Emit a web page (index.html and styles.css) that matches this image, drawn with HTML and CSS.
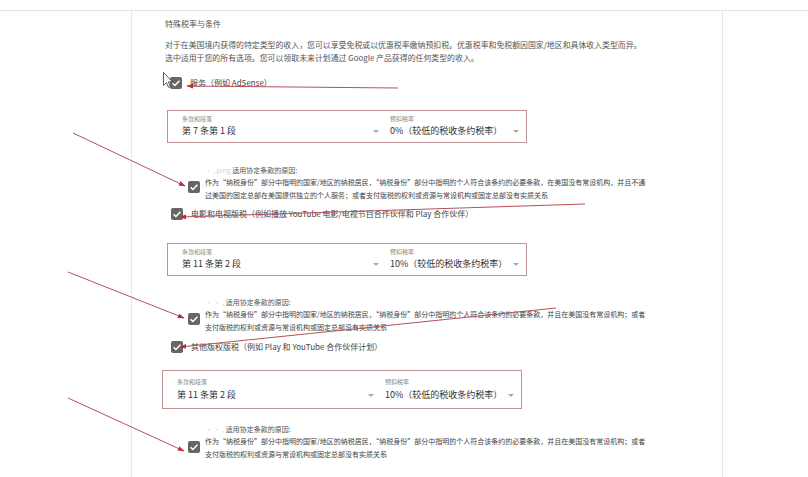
FILE: index.html
```html
<!DOCTYPE html>
<html lang="zh-CN">
<head>
    <meta charset="UTF-8">
    <meta name="viewport" content="width=device-width, initial-scale=1.0">
    <title>特殊税率与条件</title>
    <link rel="stylesheet" href="styles.css">
</head>
<body>
  <div class="page">
    <div class="gutter"></div>
    <div class="main">
      <h1 class="title">特殊税率与条件</h1>
      <p class="intro">对于在美国境内获得的特定类型的收入，您可以享受免税或以优惠税率缴纳预扣税。优惠税率和免税额因国家/地区和具体收入类型而异。<br>选中适用于您的所有选项。您可以领取未来计划通过 Google 产品获得的任何类型的收入。</p>

      <!-- 服务 -->
      <label class="option first">
        <span class="check"><svg viewBox="0 0 12 12"><path d="M2.6 6.2l2.3 2.3 4.6-4.8" /></svg></span>
        <span>服务（例如 AdSense）</span>
      </label>
      <div class="treaty">
        <div class="field article">
          <div class="field-label">条款和段落</div>
          <div class="field-value">第 7 条第 1 段<i class="caret"></i></div>
        </div>
        <div class="field rate">
          <div class="field-label">预扣税率</div>
          <div class="field-value">0%（较低的税收条约税率）<i class="caret"></i></div>
        </div>
      </div>
      <div class="reason r1">
        <span class="check"><svg viewBox="0 0 12 12"><path d="M2.6 6.2l2.3 2.3 4.6-4.8" /></svg></span>
        <div class="reason-text">
          <div class="reason-label"><span class="faded">· ˌ ping</span> 适用协定条款的原因:</div>
          <p>作为“纳税身份”部分中指明的国家/地区的纳税居民，“纳税身份”部分中指明的个人符合该条约的必要条款，在美国没有常设机构，并且不通<br>过美国的固定总部在美国提供独立的个人服务；或者支付版税的权利或资源与常设机构或固定总部没有实质关系</p>
        </div>
      </div>

      <!-- 电影和电视版税 -->
      <label class="option o2">
        <span class="check"><svg viewBox="0 0 12 12"><path d="M2.6 6.2l2.3 2.3 4.6-4.8" /></svg></span>
        <span>电影和电视版税（例如播放 YouTube 电影/电视节目合作伙伴和 Play 合作伙伴）</span>
      </label>
      <div class="treaty t2">
        <div class="field article">
          <div class="field-label">条款和段落</div>
          <div class="field-value">第 11 条第 2 段<i class="caret"></i></div>
        </div>
        <div class="field rate">
          <div class="field-label">预扣税率</div>
          <div class="field-value">10%（较低的税收条约税率）<i class="caret"></i></div>
        </div>
      </div>
      <div class="reason r2">
        <span class="check"><svg viewBox="0 0 12 12"><path d="M2.6 6.2l2.3 2.3 4.6-4.8" /></svg></span>
        <div class="reason-text">
          <div class="reason-label"><span class="faded">· · ,</span> 适用协定条款的原因:</div>
          <p>作为“纳税身份”部分中指明的国家/地区的纳税居民，“纳税身份”部分中指明的个人符合该条约的必要条款，并且在美国没有常设机构；或者<br>支付版税的权利或资源与常设机构或固定总部没有实质关系</p>
        </div>
      </div>

      <!-- 其他版权版税 -->
      <label class="option o3">
        <span class="check"><svg viewBox="0 0 12 12"><path d="M2.6 6.2l2.3 2.3 4.6-4.8" /></svg></span>
        <span>其他版权版税（例如 Play 和 YouTube 合作伙伴计划）</span>
      </label>
      <div class="treaty t3">
        <div class="field article">
          <div class="field-label">条款和段落</div>
          <div class="field-value">第 11 条第 2 段<i class="caret"></i></div>
        </div>
        <div class="field rate">
          <div class="field-label">预扣税率</div>
          <div class="field-value">10%（较低的税收条约税率）<i class="caret"></i></div>
        </div>
      </div>
      <div class="reason r3">
        <span class="check"><svg viewBox="0 0 12 12"><path d="M2.6 6.2l2.3 2.3 4.6-4.8" /></svg></span>
        <div class="reason-text">
          <div class="reason-label"><span class="faded">· · ,</span> 适用协定条款的原因:</div>
          <p>作为“纳税身份”部分中指明的国家/地区的纳税居民，“纳税身份”部分中指明的个人符合该条约的必要条款，并且在美国没有常设机构；或者<br>支付版税的权利或资源与常设机构或固定总部没有实质关系</p>
        </div>
      </div>
    </div>
    <div class="aside"></div>
  </div>

  <!-- annotation arrows drawn over the screenshot -->
  <svg class="marks" viewBox="0 0 808 477" width="808" height="477">
    <defs>
      <marker id="head" viewBox="0 0 10 10" refX="9" refY="5" markerWidth="7" markerHeight="7" orient="auto">
        <path d="M0 1.5L10 5 0 8.5z" fill="#c4283a" />
      </marker>
    </defs>
    <g stroke="#b8505a" stroke-width="1" fill="none" marker-end="url(#head)">
      <line x1="398" y1="88" x2="187" y2="86" />
      <line x1="73" y1="133" x2="185" y2="186" />
      <line x1="585" y1="204" x2="180" y2="217" />
      <line x1="68" y1="272" x2="184" y2="318" />
      <line x1="556" y1="308" x2="180" y2="347" />
      <line x1="68" y1="398" x2="184" y2="451" />
    </g>
    <path class="cursor" d="M163.5 72.5v13l3-3 2.2 5 1.8-.8-2.2-4.8h4.2z" />
  </svg>
</body>
</html>
```

FILE: styles.css
```css
  body {
    margin: 0;
    padding-top: 10px;
    background: white;
    font-family: "Noto Sans CJK SC", "Noto Sans", sans-serif;
    color: #333;
  }

  .page {
    display: flex;
    border-top: 1px solid #e3e3e3;
    height: 466px;
    overflow: hidden;
  }

  .gutter {
    width: 131px;
    border-right: 1px solid #e8e8e8;
  }

  .main {
    width: 557px;
    padding: 6px 0 0 33px;
    border-right: 1px solid #e8e8e8;
  }

  .aside {
    flex: 1;
  }

  .title {
    margin: 0;
    font-size: 8px;
    line-height: 13px;
    font-weight: normal;
    color: #555;
  }

  .intro {
    margin: 8px 0 0 0;
    font-size: 7.9px;
    line-height: 13px;
    color: #555;
    white-space: nowrap;
  }

  .check {
    display: block;
    flex: none;
    width: 12px;
    height: 12px;
    background: #666;
    border-radius: 2px;
  }
  .check svg {
    display: block;
    width: 12px;
    height: 12px;
    fill: none;
    stroke: white;
    stroke-width: 1.5;
  }

  .option {
    display: flex;
    align-items: center;
    gap: 8px;
    margin-left: 5px;
    font-size: 8px;
    line-height: 12px;
    color: #444;
  }
  .option.first { margin-top: 13px; }
  .option.o2 { margin-top: 7px; margin-left: 6px; }
  .option.o3 { margin-top: 8px; margin-left: 6px; }

  .treaty {
    display: flex;
    width: 358px;
    margin: 21px 0 0 2px;
    padding: 4px 0 5px 0;
    border: 1px solid #c09494;
  }
  .treaty.t2 { margin-top: 23px; }
  .treaty.t3 {
    margin: 17px 0 0 -3px;
    padding: 7px 0 7px 0;
  }
  .t3 .field-label { margin-bottom: 3px; }

  .field-label {
    font-size: 6px;
    line-height: 8px;
    color: #888;
    margin-bottom: 2px;
  }

  .field-value {
    display: flex;
    justify-content: space-between;
    align-items: center;
    font-size: 9px;
    line-height: 12px;
    color: #333;
  }

  .article {
    width: 197px;
    padding: 0 11px 0 14px;
  }
  .rate {
    flex: 1;
    padding-right: 7px;
  }

  .caret {
    width: 0;
    height: 0;
    border-left: 3.5px solid transparent;
    border-right: 3.5px solid transparent;
    border-top: 3.5px solid #aaa;
  }

  .reason {
    display: flex;
    gap: 5px;
    margin-left: 23px;
    margin-top: 21px;
  }
  .reason .check { margin-top: 17px; }
  .reason.r2 { margin-top: 20px; }
  .reason.r3 { margin-top: 14px; }
  .r3 .check { margin-top: 18px; }

  .reason-label {
    font-size: 7px;
    line-height: 12px;
    color: #555;
  }
  .faded {
    color: #d4d4d4;
  }

  .reason-text p {
    margin: 0;
    font-size: 7px;
    line-height: 12.5px;
    color: #444;
    white-space: nowrap;
  }

  .marks {
    position: absolute;
    top: 0;
    left: 0;
    pointer-events: none;
  }
  .cursor {
    fill: white;
    stroke: #333;
    stroke-width: 0.8;
  }
```
